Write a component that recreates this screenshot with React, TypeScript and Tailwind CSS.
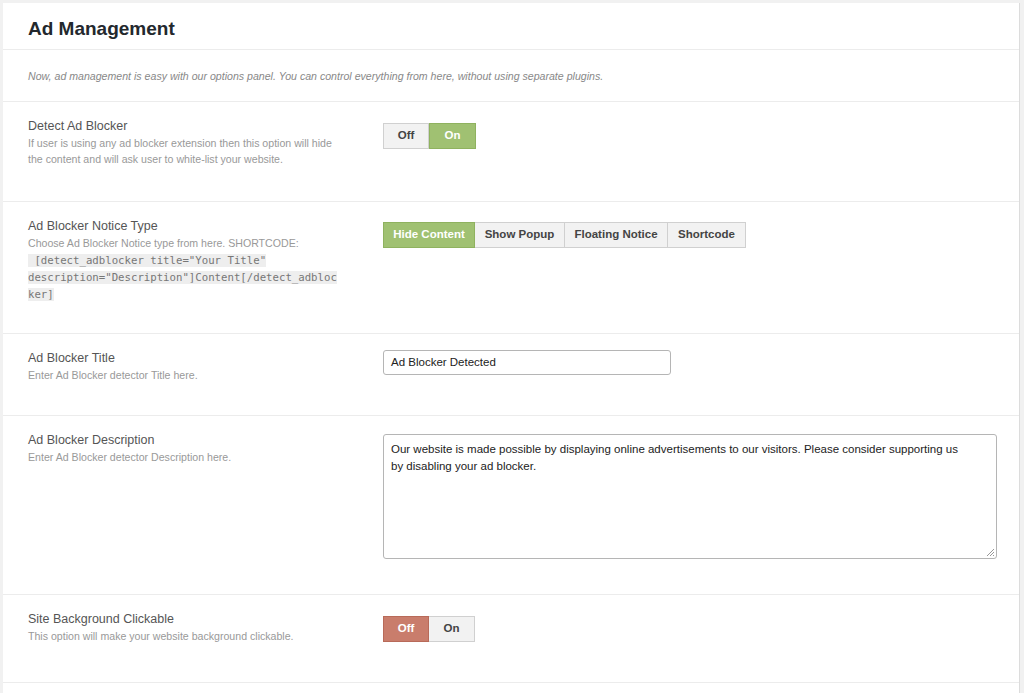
import React from 'react';

const font = { fontFamily: '"Liberation Sans", Arial, sans-serif' };

const Toggle: React.FC<{ value: boolean; offRed?: boolean }> = ({ value, offRed }) => (
  <div className="flex h-[26px] text-[11.5px] font-bold">
    <div
      className={
        !value && offRed
          ? 'w-[46px] flex items-center justify-center bg-[#c97d6c] text-white border border-[#b86a59]'
          : 'w-[46px] flex items-center justify-center bg-[#f2f2f2] text-[#444] border border-[#d0d0d0]'
      }
    >
      Off
    </div>
    <div
      className={
        value
          ? 'w-[47px] flex items-center justify-center bg-[#a0c172] text-white border border-[#8fb25f]'
          : 'w-[46px] flex items-center justify-center bg-[#f2f2f2] text-[#444] border border-[#d0d0d0] border-l-0'
      }
    >
      On
    </div>
  </div>
);

const Row: React.FC<{ title: string; desc: React.ReactNode; h: string; pt: string; children: React.ReactNode }> = ({
  title,
  desc,
  h,
  pt,
  children,
}) => (
  <div className={`flex border-b border-[#ececec] ${h}`}>
    <div className="w-[380px] shrink-0 pl-[25px] pt-[16px]">
      <div className="text-[12.5px] text-[#555] leading-[16px]">{title}</div>
      <div className="w-[312px] text-[10.6px] text-[#999] leading-[16px] mt-[1px]">{desc}</div>
    </div>
    <div className={`flex-1 ${pt}`}>{children}</div>
  </div>
);

const tabs = ['Hide Content', 'Show Popup', 'Floating Notice', 'Shortcode'];
const tabW = ['w-[92px]', 'w-[90px]', 'w-[103px]', 'w-[78px]'];

const App: React.FC = () => {
  return (
    <div className="w-[1024px] h-[693px] bg-[#f1f1f1] pt-[3px] pl-[3px] overflow-hidden" style={font}>
      <div className="w-[1017px] h-[700px] bg-white border-r border-[#dcdcdc]">
        <div className="h-[47px] border-b border-[#ececec] pl-[25px] flex items-center">
          <h1 className="text-[19px] font-bold text-[#23282d] pt-[6px]">Ad Management</h1>
        </div>
        <div className="h-[52px] border-b border-[#ececec] pl-[25px] flex items-center">
          <p className="text-[10.6px] italic text-[#888] pt-[2px]">
            Now, ad management is easy with our options panel. You can control everything from here, without using
            separate plugins.
          </p>
        </div>

        <Row
          h="h-[100px]"
          pt="pt-[21px]"
          title="Detect Ad Blocker"
          desc="If user is using any ad blocker extension then this option will hide the content and will ask user to white-list your website."
        >
          <Toggle value={true} />
        </Row>

        <Row
          h="h-[132px]"
          pt="pt-[20px]"
          title="Ad Blocker Notice Type"
          desc={
            <>
              Choose Ad Blocker Notice type from here. SHORTCODE:
              <span className="block w-[310px] break-words leading-[17px] mt-[1px]">
                <code
                  className="bg-[#eeeeee] text-[#777] text-[10.7px]"
                  style={{ fontFamily: '"DejaVu Sans Mono", monospace' }}
                >
                  &nbsp;[detect_adblocker title="Your Title" description="Description"]Content[/detect_adblocker]
                </code>
              </span>
            </>
          }
        >
          <div className="flex h-[26px] text-[11.5px] font-bold">
            {tabs.map((t, i) => (
              <div
                key={t}
                className={
                  i === 0
                    ? `${tabW[i]} flex items-center justify-center bg-[#a0c172] text-white border border-[#8fb25f]`
                    : `${tabW[i]} flex items-center justify-center bg-[#f2f2f2] text-[#444] border border-l-0 border-[#d0d0d0]`
                }
              >
                {t}
              </div>
            ))}
          </div>
        </Row>

        <Row h="h-[82px]" pt="pt-[16px]" title="Ad Blocker Title" desc="Enter Ad Blocker detector Title here.">
          <div className="w-[288px] h-[25px] border border-[#b5b5b5] rounded-[3px] px-[7px] flex items-center text-[11.5px] text-[#222]">
            Ad Blocker Detected
          </div>
        </Row>

        <Row
          h="h-[179px]"
          pt="pt-[18px]"
          title="Ad Blocker Description"
          desc="Enter Ad Blocker detector Description here."
        >
          <div className="relative w-[614px] h-[125px] border border-[#b5b5b5] rounded-[3px] px-[7px] pt-[6px] text-[11.5px] leading-[17px] text-[#222]">
            <div className="w-[575px]">
              Our website is made possible by displaying online advertisements to our visitors. Please consider
              supporting us by disabling your ad blocker.
            </div>
            <svg className="absolute right-[1px] bottom-[1px]" width="10" height="10" viewBox="0 0 10 10">
              <path d="M9 2 L2 9 M9 5 L5 9 M9 8 L8 9" stroke="#999" strokeWidth="1" />
            </svg>
          </div>
        </Row>

        <Row
          h="h-[88px]"
          pt="pt-[21px]"
          title="Site Background Clickable"
          desc="This option will make your website background clickable."
        >
          <Toggle value={false} offRed />
        </Row>
      </div>
    </div>
  );
};

export default App;
